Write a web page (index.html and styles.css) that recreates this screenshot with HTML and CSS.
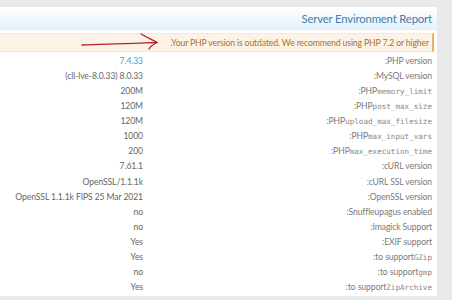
FILE: index.html
```html
<!DOCTYPE html>
<html>
<head>
<meta charset="utf-8">
<link rel="stylesheet" href="styles.css">
</head>
<body>
<div class="panel">
  <div class="header"><h1 class="title">Server Environment Report</h1></div>
  <div class="notice">
    <svg class="arrow" width="90" height="24" viewBox="0 0 90 24">
      <path d="M2 14 C 25 13.5, 50 12.5, 77 11.5" fill="none" stroke="#b3232e" stroke-width="1.3" stroke-linecap="round"/>
      <path d="M61 3 C 67 6.5, 73 9, 77 11.5 C 73 13.5, 70 16, 69 18" fill="none" stroke="#b3232e" stroke-width="1.3" stroke-linecap="round" stroke-linejoin="round"/>
    </svg>
    <span class="notice-text">.Your PHP version is outdated. We recommend using PHP 7.2 or higher</span>
  </div>
  <div class="rows">
    <div class="row"><span class="val blue">7.4.33</span><span class="lbl">:PHP version</span></div>
    <div class="row"><span class="val">(cll-lve-8.0.33) 8.0.33</span><span class="lbl">:MySQL version</span></div>
    <div class="row"><span class="val">200M</span><span class="lbl">:PHP<code>memory_limit</code></span></div>
    <div class="row"><span class="val">120M</span><span class="lbl">:PHP<code>post_max_size</code></span></div>
    <div class="row"><span class="val">120M</span><span class="lbl">:PHP<code>upload_max_filesize</code></span></div>
    <div class="row"><span class="val">1000</span><span class="lbl">:PHP<code>max_input_vars</code></span></div>
    <div class="row"><span class="val">200</span><span class="lbl">:PHP<code>max_execution_time</code></span></div>
    <div class="row"><span class="val">7.61.1</span><span class="lbl">:cURL version</span></div>
    <div class="row"><span class="val">OpenSSL/1.1.1k</span><span class="lbl">:cURL SSL version</span></div>
    <div class="row"><span class="val">OpenSSL 1.1.1k FIPS 25 Mar 2021</span><span class="lbl">:OpenSSL version</span></div>
    <div class="row"><span class="val">no</span><span class="lbl">:Snuffleupagus enabled</span></div>
    <div class="row"><span class="val">no</span><span class="lbl">:Imagick Support</span></div>
    <div class="row"><span class="val">Yes</span><span class="lbl">:EXIF support</span></div>
    <div class="row"><span class="val">Yes</span><span class="lbl">:to support<code>GZip</code></span></div>
    <div class="row"><span class="val">no</span><span class="lbl">:to support<code>gmp</code></span></div>
    <div class="row"><span class="val">Yes</span><span class="lbl">:to support<code>ZipArchive</code></span></div>
  </div>
</div>
</body>
</html>
```

FILE: styles.css
```css
html, body {
  margin: 0;
  padding: 0;
  background: #e9e9e9;
}
body {
  font-family: Lato, "Noto Sans", sans-serif;
}
.panel {
  width: 437px;
  margin-top: 7px;
  height: 289px;
  background: #fff;
  box-sizing: border-box;
}
.header {
  height: 23px;
  background: linear-gradient(#ffffff, #e5f2fc);
  border-bottom: 1px solid #e3ecf3;
  display: flex;
  align-items: center;
  justify-content: flex-end;
  padding-right: 5px;
  box-sizing: border-box;
}
.title {
  margin: 0;
  font-size: 11.3px;
  letter-spacing: -0.15px;
  font-weight: normal;
  color: #3c7fab;
}
.notice {
  margin-top: 3px;
  width: 434px;
  height: 19px;
  box-sizing: border-box;
  background: #fdf2e6;
  border-top: 1px solid #f6e6d6;
  border-bottom: 1px solid #f6e6d6;
  border-right: 2px solid #e7b266;
  display: flex;
  align-items: center;
  justify-content: flex-end;
  padding-right: 3px;
  position: relative;
}
.arrow {
  position: absolute;
  left: 80px;
  top: -3px;
}
.notice-text {
  font-size: 8.7px;
  letter-spacing: -0.15px;
  color: #a87434;
  white-space: nowrap;
}
.rows {
  padding-top: 2px;
}
.row {
  display: grid;
  grid-template-columns: 143px 1fr;
  height: 15.07px;
  line-height: 15px;
  font-size: 8.6px;
  letter-spacing: -0.1px;
  white-space: nowrap;
}
.val {
  text-align: right;
  color: #666;
}
.val.blue {
  color: #4a9ccd;
}
.lbl {
  text-align: right;
  color: #7a7a7a;
  padding-right: 5px;
}
code {
  font-family: "DejaVu Sans Mono", monospace;
  font-size: 7.6px;
  letter-spacing: 0;
  color: #888;
}
```
